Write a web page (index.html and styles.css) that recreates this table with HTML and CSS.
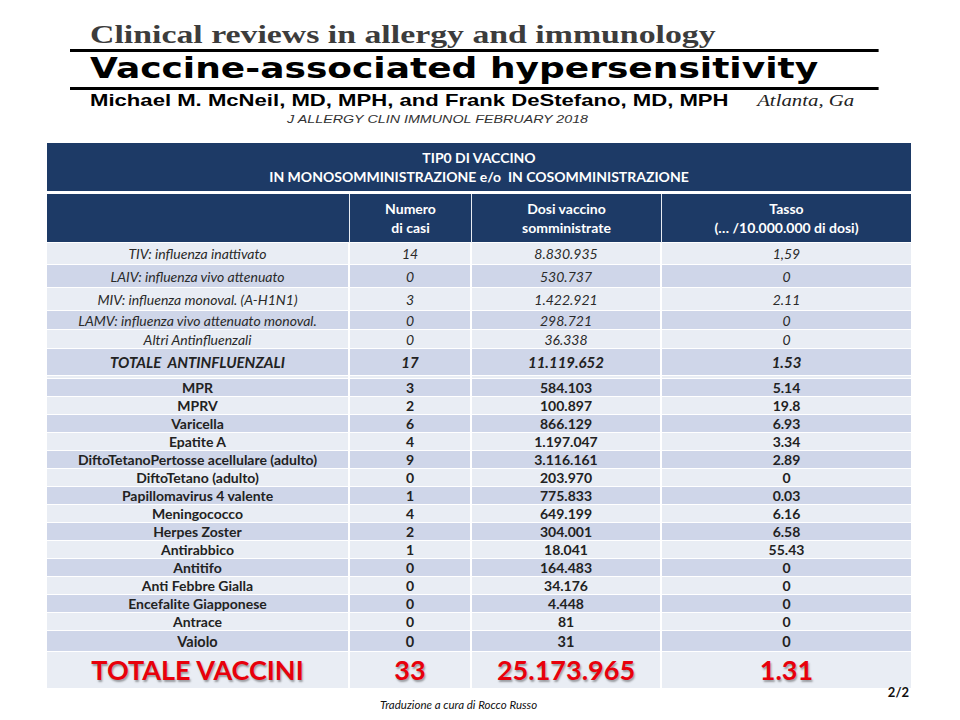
FILE: index.html
```html
<!DOCTYPE html>
<html lang="it">
<head>
    <meta charset="UTF-8">
    <meta name="viewport" content="width=device-width, initial-scale=1.0">
    <title>Vaccine-associated hypersensitivity</title>
    <link rel="stylesheet" href="styles.css">
</head>
<body>
    <div class="citation">
        <div class="stretch">
            <div class="series">Clinical reviews in allergy and immunology</div>
            <div class="title">Vaccine-associated hypersensitivity</div>
            <div class="authors">
                <span>Michael M. McNeil, MD, MPH, and Frank DeStefano, MD, MPH</span>
                <span class="place">Atlanta, Ga</span>
            </div>
            <div class="journal">J ALLERGY CLIN IMMUNOL FEBRUARY 2018</div>
        </div>
    </div>

    <table class="data">
        <colgroup>
            <col class="c-name">
            <col class="c-cases">
            <col class="c-doses">
            <col class="c-rate">
        </colgroup>
        <thead>
            <tr class="head-main">
                <th colspan="4">TIP0 DI VACCINO<br>IN MONOSOMMINISTRAZIONE e/o&nbsp; IN COSOMMINISTRAZIONE</th>
            </tr>
            <tr class="head-cols">
                <th></th>
                <th>Numero<br>di casi</th>
                <th>Dosi vaccino<br>somministrate</th>
                <th>Tasso<br>(… /10.000.000 di dosi)</th>
            </tr>
        </thead>
        <tbody>
            <tr class="flu r22"><td>TIV: influenza inattivato</td><td>14</td><td>8.830.935</td><td>1,59</td></tr>
            <tr class="flu r23"><td>LAIV: influenza vivo attenuato</td><td>0</td><td>530.737</td><td>0</td></tr>
            <tr class="flu r23"><td>MIV: influenza monoval. (A-H1N1)</td><td>3</td><td>1.422.921</td><td>2.11</td></tr>
            <tr class="flu r19"><td>LAMV: influenza vivo attenuato monoval.</td><td>0</td><td>298.721</td><td>0</td></tr>
            <tr class="flu r19"><td>Altri Antinfluenzali</td><td>0</td><td>36.338</td><td>0</td></tr>
            <tr class="flu-total"><td>TOTALE&nbsp; ANTINFLUENZALI</td><td>17</td><td>11.119.652</td><td>1.53</td></tr>
            <tr class="spacer"><td></td><td></td><td></td><td></td></tr>
            <tr class="vac"><td>MPR</td><td>3</td><td>584.103</td><td>5.14</td></tr>
            <tr class="vac"><td>MPRV</td><td>2</td><td>100.897</td><td>19.8</td></tr>
            <tr class="vac"><td>Varicella</td><td>6</td><td>866.129</td><td>6.93</td></tr>
            <tr class="vac"><td>Epatite A</td><td>4</td><td>1.197.047</td><td>3.34</td></tr>
            <tr class="vac"><td>DiftoTetanoPertosse acellulare (adulto)</td><td>9</td><td>3.116.161</td><td>2.89</td></tr>
            <tr class="vac"><td>DiftoTetano (adulto)</td><td>0</td><td>203.970</td><td>0</td></tr>
            <tr class="vac"><td>Papillomavirus 4 valente</td><td>1</td><td>775.833</td><td>0.03</td></tr>
            <tr class="vac"><td>Meningococco</td><td>4</td><td>649.199</td><td>6.16</td></tr>
            <tr class="vac"><td>Herpes Zoster</td><td>2</td><td>304.001</td><td>6.58</td></tr>
            <tr class="vac"><td>Antirabbico</td><td>1</td><td>18.041</td><td>55.43</td></tr>
            <tr class="vac"><td>Antitifo</td><td>0</td><td>164.483</td><td>0</td></tr>
            <tr class="vac"><td>Anti Febbre Gialla</td><td>0</td><td>34.176</td><td>0</td></tr>
            <tr class="vac"><td>Encefalite Giapponese</td><td>0</td><td>4.448</td><td>0</td></tr>
            <tr class="vac"><td>Antrace</td><td>0</td><td>81</td><td>0</td></tr>
            <tr class="vac last"><td>Vaiolo</td><td>0</td><td>31</td><td>0</td></tr>
            <tr class="grand-total"><td>TOTALE VACCINI</td><td>33</td><td>25.173.965</td><td>1.31</td></tr>
        </tbody>
    </table>

    <div class="footer">
        <span class="credit">Traduzione a cura di Rocco Russo</span>
        <span class="page-no">2/2</span>
    </div>
</body>
</html>
```

FILE: styles.css
```css
body {
    margin: 0;
    background: #fff;
    font-family: Lato, "Open Sans", sans-serif;
    color: #1a1a1a;
}

/* intestazione articolo (scansione allargata in orizzontale) */
.citation {
    width: 808px;
    height: 108px;
    margin-left: 70px;
    padding-top: 20px;
}
.stretch {
    width: 621.5px;
    transform: scaleX(1.3);
    transform-origin: 0 0;
}
.series {
    height: 32px;
    padding-left: 15.4px;
    font-family: "Liberation Serif", serif;
    font-weight: bold;
    font-size: 26px;
    line-height: 30px;
    color: #3c3c3c;
    border-bottom: 3px solid #000;
    box-sizing: border-box;
}
.title {
    height: 38px;
    padding-left: 15.4px;
    font-family: "DejaVu Sans", sans-serif;
    font-weight: bold;
    font-size: 27.7px;
    line-height: 34px;
    color: #000;
    border-bottom: 3px solid #000;
    box-sizing: border-box;
}
.authors {
    display: flex;
    align-items: baseline;
    padding: 1px 0 0 15.4px;
    height: 22px;
    font-family: "Liberation Sans", Arial, sans-serif;
    font-weight: bold;
    font-size: 17px;
    color: #000;
}
.place {
    margin-left: 22px;
    font-family: "Liberation Serif", serif;
    font-style: italic;
    font-weight: normal;
    font-size: 16px;
    color: #222;
}
.journal {
    padding-left: 167px;
    font-family: "Liberation Sans", Arial, sans-serif;
    font-style: italic;
    font-size: 11px;
    color: #333;
}

/* tabella */
.data {
    margin: 15px 0 0 47px;
    width: 864px;
    border-collapse: separate;
    border-spacing: 0;
    table-layout: fixed;
    text-align: center;
}
.c-name { width: 303px; }
.c-cases { width: 122px; }
.c-doses { width: 190px; }
.c-rate { width: 249px; }

.data th {
    background: #1d3a66;
    color: #fff;
    font-weight: bold;
    font-size: 14px;
    line-height: 19px;
    padding: 0;
}
.head-main th {
    height: 48px;
    border-bottom: 3px solid #fff;
}
.head-cols th {
    height: 48px;
    border-right: 1px solid #e8ecf3;
    border-bottom: 1px solid #fff;
}
.head-cols th:last-child { border-right: none; }

.data td {
    padding: 0;
    height: 17px;
    font-size: 14px;
    line-height: 17px;
    background: #e9edf4;
    border-right: 2px solid #fff;
    border-bottom: 1px solid #fff;
    color: #222;
}
.data td:last-child { border-right: none; }
.data tbody tr:nth-child(even) td { background: #cfd6e9; }

.flu td {
    font-style: italic;
    color: #2a2a2a;
}
.r22 td { height: 21px; }
.r23 td { height: 22px; }
.r19 td { height: 18px; }
.flu-total td {
    height: 26px;
    font-style: italic;
    font-weight: bold;
    font-size: 15px;
}
.spacer td { height: 2px; }
.vac td {
    font-weight: bold;
}
.vac.last td {
    height: 20px;
    font-size: 14.5px;
}
.grand-total td {
    height: 36px;
    font-weight: bold;
    font-size: 27px;
    line-height: 34px;
    color: #e8000b;
    text-shadow: 1px 2px 2px rgba(0, 0, 0, 0.35);
}

.footer {
    display: flex;
    align-items: flex-start;
    width: 862px;
    margin-left: 47px;
}
.credit {
    margin: 9px 0 0 333px;
    font-style: italic;
    font-size: 11.5px;
    color: #111;
}
.page-no {
    margin: -5px 0 0 auto;
    font-weight: bold;
    font-size: 13px;
    color: #111;
}
```
